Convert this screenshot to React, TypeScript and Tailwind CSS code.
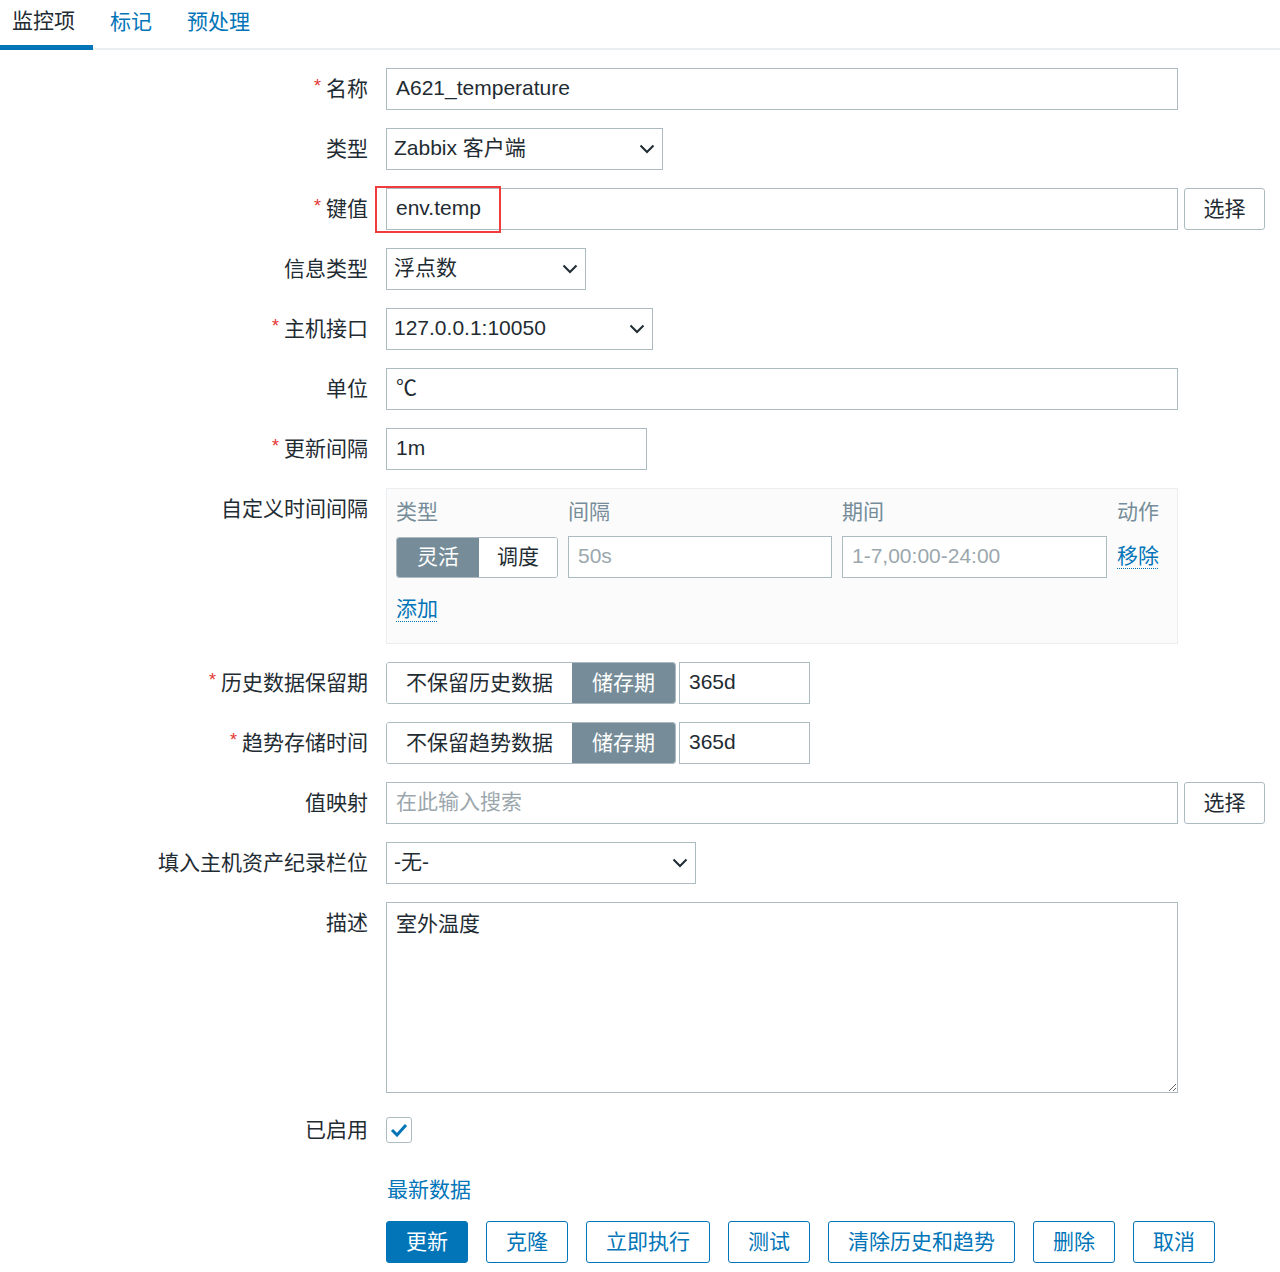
import React from 'react';

const FONT = '"Liberation Sans", "Noto Sans CJK SC", sans-serif';

const Chevron: React.FC = () => (
  <svg width="16" height="10" viewBox="0 0 16 10" className="shrink-0">
    <polyline points="1.5,1.5 8,8 14.5,1.5" fill="none" stroke="#1f2c33" strokeWidth="2" />
  </svg>
);

const Label: React.FC<{ text: string; required?: boolean; tall?: boolean }> = ({ text, required, tall }) => (
  <div className={`flex justify-end items-center pb-[2px] ${tall ? 'h-[26px]' : 'h-[42px]'} text-[#1f2c33]`}>
    {required && <span className="text-[#e33734] text-[18px] mr-[5px] leading-none -mt-[4px]">*</span>}
    <span>{text}</span>
  </div>
);

const TextBox: React.FC<{ value?: string; placeholder?: string; w: string }> = ({ value, placeholder, w }) => (
  <div className={`${w} h-[42px] border border-[#acbbc2] bg-white flex items-center px-[9px] pb-[3px]`}>
    {value ? <span className="text-[#1f2c33]">{value}</span> : <span className="text-[#9ba7ad]">{placeholder}</span>}
  </div>
);

const Select: React.FC<{ value: string; w: string }> = ({ value, w }) => (
  <div className={`${w} h-[42px] border border-[#acbbc2] bg-white flex items-center justify-between pl-[7px] pr-[7px]`}>
    <span className="text-[#1f2c33] pb-[3px]">{value}</span>
    <Chevron />
  </div>
);

const SelectBtn: React.FC = () => (
  <button className="ml-[6px] w-[81px] h-[42px] pb-[2px] border border-[#acbbc2] rounded-[3px] bg-white text-[#1f2c33]">选择</button>
);

const Retention: React.FC<{ left: string }> = ({ left }) => (
  <div className="flex items-center">
    <div className="flex h-[42px] border border-[#acbbc2] rounded-[3px] overflow-hidden">
      <div className="w-[185px] flex items-center justify-center pb-[2px] bg-white text-[#1f2c33]">{left}</div>
      <div className="w-[103px] flex items-center justify-center pb-[2px] bg-[#768d99] text-white">储存期</div>
    </div>
    <div className="ml-[3px]">
      <TextBox value="365d" w="w-[131px]" />
    </div>
  </div>
);

const buttons = ['克隆', '立即执行', '测试', '清除历史和趋势', '删除', '取消'];

export default function App() {
  return (
    <div className="w-[1280px] min-h-[1272px] bg-white text-[21px] leading-none text-[#1f2c33]" style={{ fontFamily: FONT }}>
      {/* Tabs */}
      <div className="flex h-[50px] border-b-2 border-[#ebeef0]">
        <div className="w-[93px] pl-[12px] flex items-center border-b-[5px] border-[#0275b8] -mb-[2px] pb-[4px] text-[#1f2c33]">监控项</div>
        <div className="ml-[17px] flex items-center pb-[6px] text-[#0275b8]">标记</div>
        <div className="ml-[35px] flex items-center pb-[6px] text-[#0275b8]">预处理</div>
      </div>

      <div className="mt-[18px] grid grid-cols-[368px_1fr] gap-x-[18px] gap-y-[18px]">
        <Label text="名称" required />
        <TextBox value="A621_temperature" w="w-[792px]" />

        <Label text="类型" />
        <Select value="Zabbix 客户端" w="w-[277px]" />

        <Label text="键值" required />
        <div className="relative flex">
          <TextBox value="env.temp" w="w-[792px]" />
          <SelectBtn />
          <div className="absolute left-[-11px] top-[-2px] w-[126px] h-[47px] border-[2.5px] border-[#f03c3c] pointer-events-none" />
        </div>

        <Label text="信息类型" />
        <Select value="浮点数" w="w-[200px]" />

        <Label text="主机接口" required />
        <Select value="127.0.0.1:10050" w="w-[267px]" />

        <Label text="单位" />
        <TextBox value="℃" w="w-[792px]" />

        <Label text="更新间隔" required />
        <TextBox value="1m" w="w-[261px]" />

        <Label text="自定义时间间隔" />
        <div className="w-[792px] h-[156px] border border-[#ebeef0] bg-[#fbfbfb] pl-[9px] pt-[12px]">
          <div className="grid grid-cols-[162px_264px_265px_auto] gap-x-[10px] text-[#768d99]">
            <div className="h-[22px]">类型</div>
            <div>间隔</div>
            <div>期间</div>
            <div>动作</div>
          </div>
          <div className="mt-[13px] grid grid-cols-[162px_264px_265px_auto] gap-x-[10px] items-center">
            <div className="flex h-[41px] border border-[#acbbc2] rounded-[3px] overflow-hidden">
              <div className="w-[82px] flex items-center justify-center pb-[2px] bg-[#768d99] text-white">灵活</div>
              <div className="flex-1 flex items-center justify-center pb-[2px] bg-white text-[#1f2c33]">调度</div>
            </div>
            <TextBox placeholder="50s" w="w-[264px]" />
            <TextBox placeholder="1-7,00:00-24:00" w="w-[265px]" />
            <span className="text-[#0275b8] underline decoration-dotted underline-offset-[5px] decoration-1 -mt-[3px]">移除</span>
          </div>
          <div className="mt-[20px]">
            <span className="text-[#0275b8] underline decoration-dotted underline-offset-[5px] decoration-1">添加</span>
          </div>
        </div>

        <Label text="历史数据保留期" required />
        <Retention left="不保留历史数据" />

        <Label text="趋势存储时间" required />
        <Retention left="不保留趋势数据" />

        <Label text="值映射" />
        <div className="flex">
          <TextBox placeholder="在此输入搜索" w="w-[792px]" />
          <SelectBtn />
        </div>

        <Label text="填入主机资产纪录栏位" />
        <Select value="-无-" w="w-[310px]" />

        <Label text="描述" />
        <textarea
          defaultValue="室外温度"
          className="w-[792px] h-[191px] border border-[#acbbc2] px-[9px] pt-[9px] pb-[10px] text-[#1f2c33] leading-[1.1] outline-none resize"
          style={{ fontFamily: FONT }}
        />

        <div className="mt-[6px]">
          <Label text="已启用" tall />
        </div>
        <div className="mt-[6px] flex">
          <div className="w-[26px] h-[26px] border border-[#acbbc2] rounded-[3px] bg-white flex items-center justify-center">
            <svg width="18" height="14" viewBox="0 0 18 14">
              <polyline points="2,7 7,12 16,2" fill="none" stroke="#0275b8" strokeWidth="3" />
            </svg>
          </div>
        </div>

        <div className="mt-[16px]" />
        <div className="mt-[16px] h-[26px] flex items-center pb-[2px]">
          <span className="ml-px text-[#0275b8]">最新数据</span>
        </div>

        <div />
        <div className="flex gap-[18px]">
          <button className="h-[42px] px-[19px] pb-[2px] rounded-[3px] bg-[#0275b8] border border-[#0275b8] text-white">更新</button>
          {buttons.map(b => (
            <button key={b} className="h-[42px] px-[19px] pb-[2px] rounded-[3px] bg-white border border-[#0275b8] text-[#0275b8]">
              {b}
            </button>
          ))}
        </div>
      </div>
    </div>
  );
}
